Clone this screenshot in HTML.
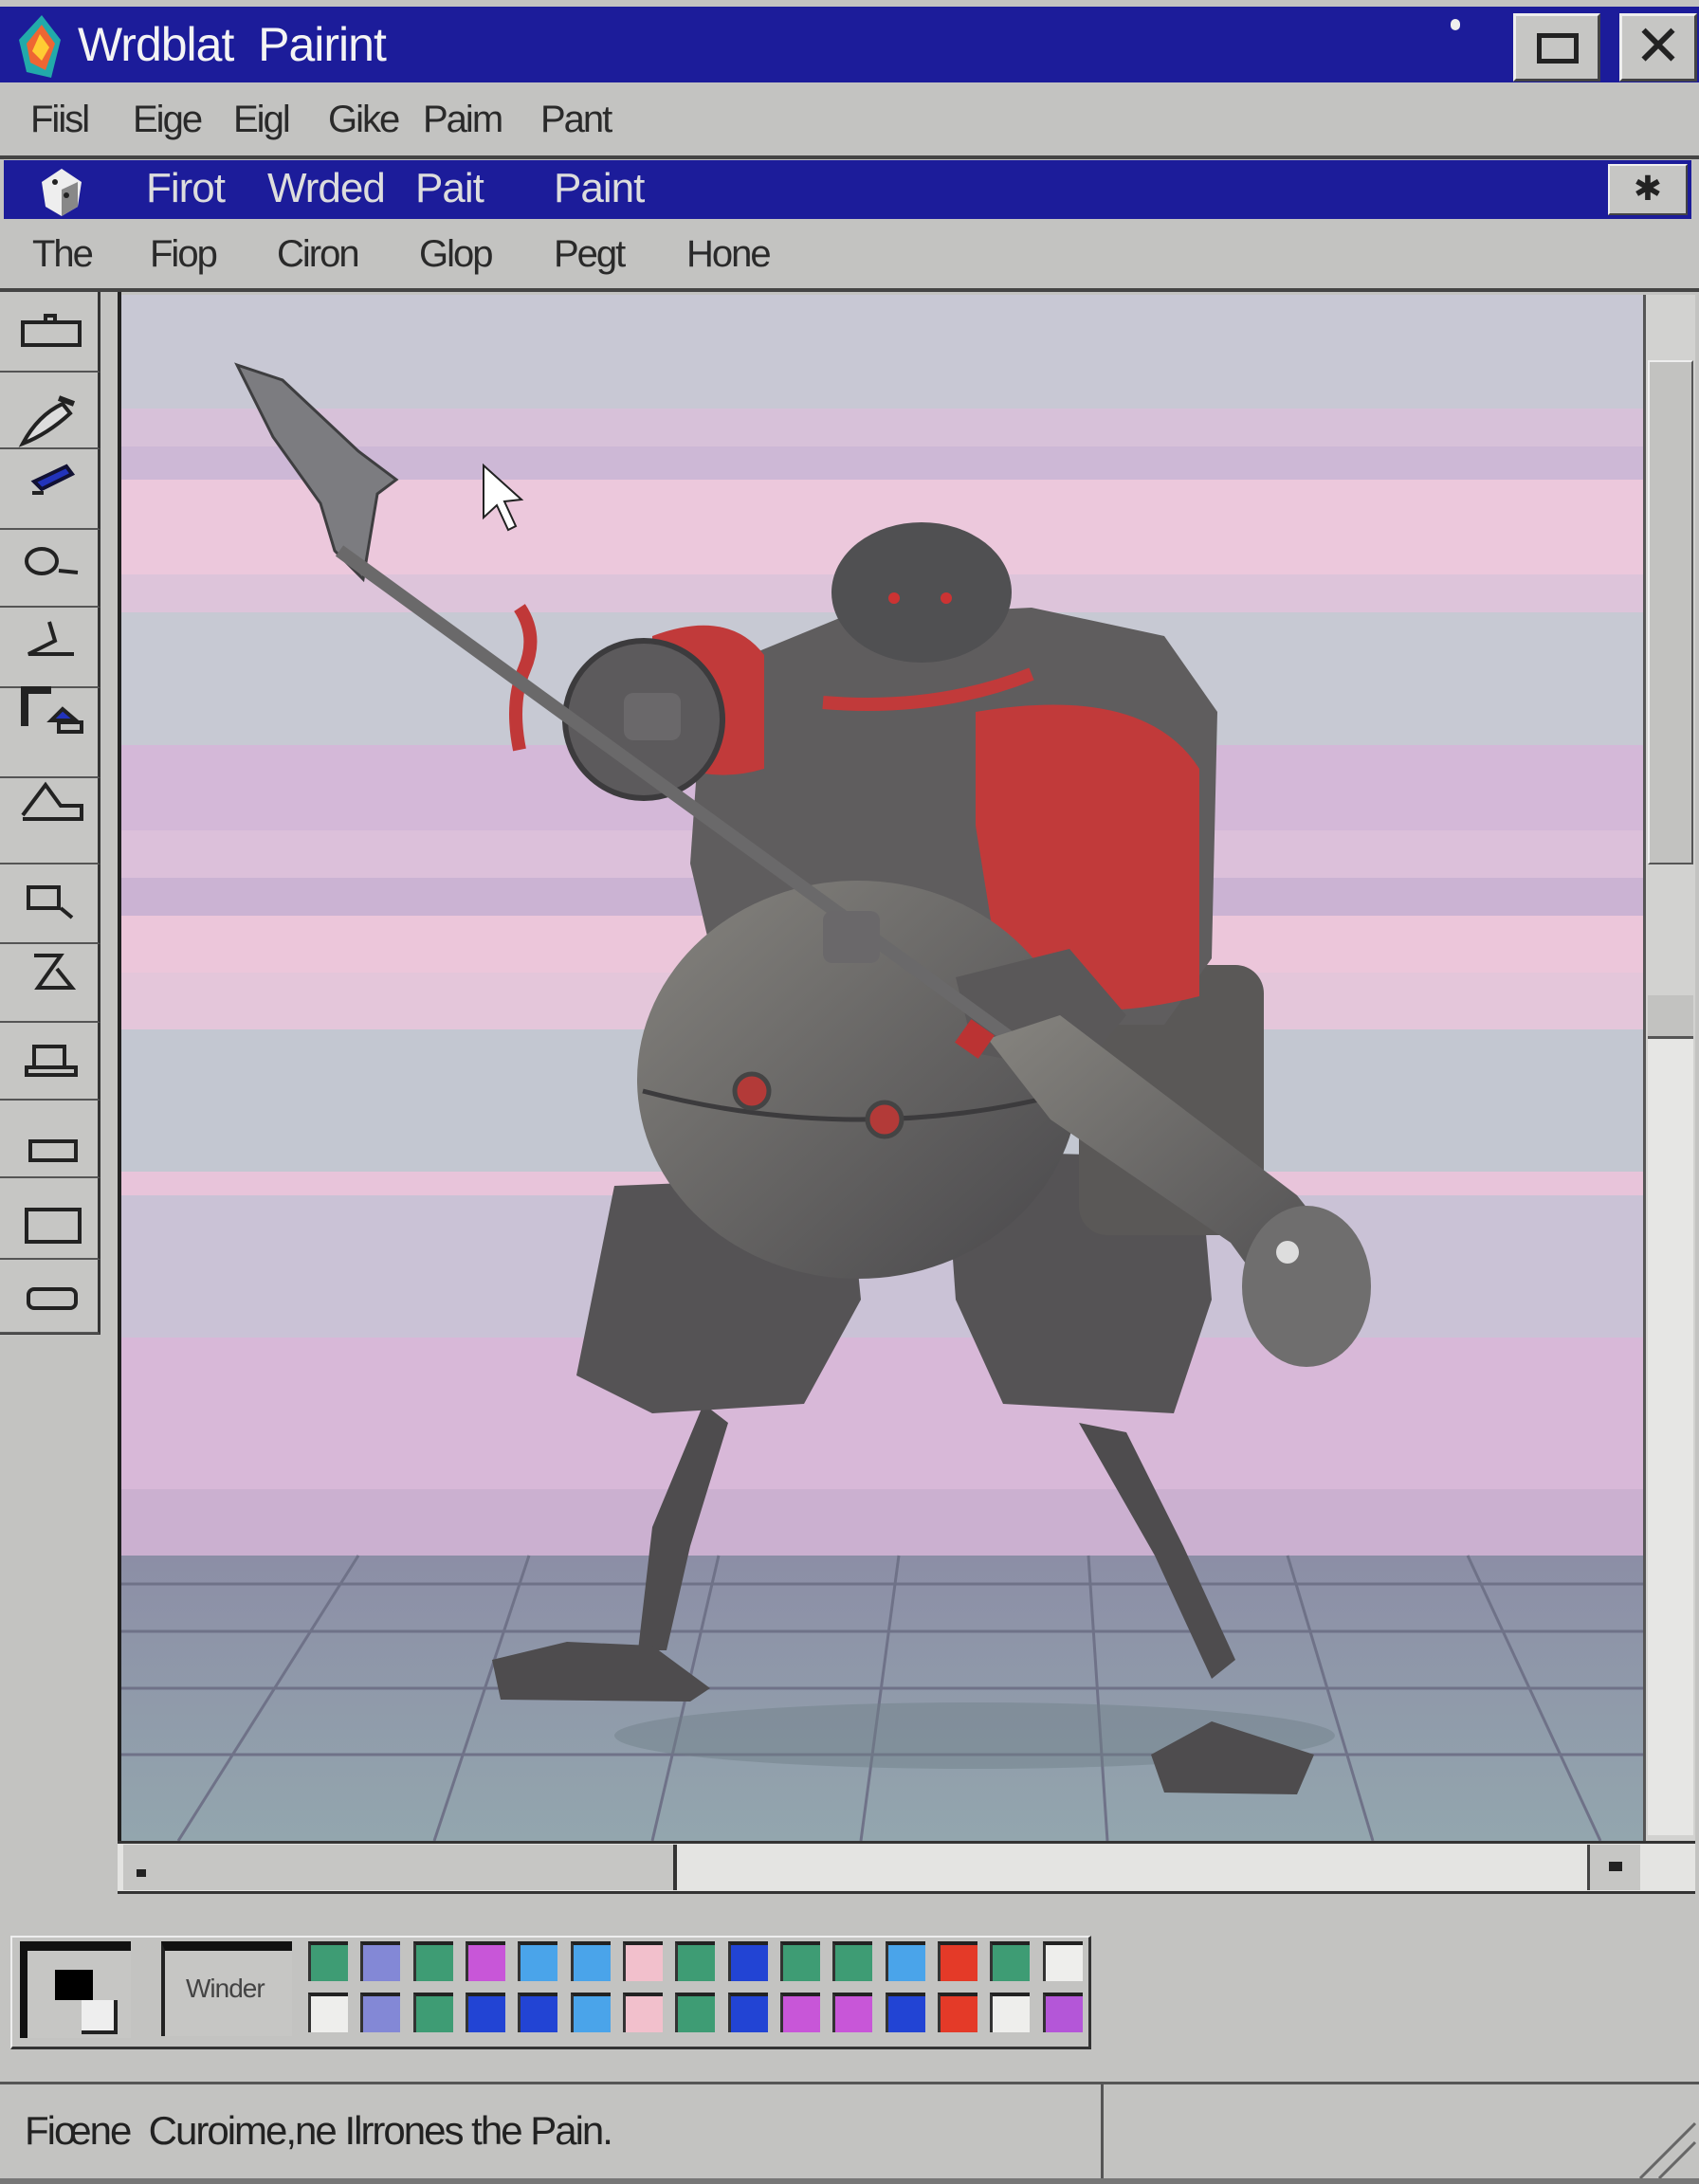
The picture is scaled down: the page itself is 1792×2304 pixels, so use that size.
<!DOCTYPE html>
<html><head><meta charset="utf-8">
<style>
*{margin:0;padding:0;box-sizing:border-box}
body{width:1792px;height:2304px;background:#c3c3c1;position:relative;overflow:hidden;font-family:"Liberation Sans",sans-serif}
.abs{position:absolute}
.blue{background:#1c1c9a}
.t{position:absolute;color:#f4f4f4;font-size:50px;letter-spacing:-1px}
.m{position:absolute;color:#2a2a2a;font-size:40px;letter-spacing:-2px}
.btn{position:absolute;left:0;width:106px;border-bottom:2px solid #555;border-right:3px solid #333;background:#c6c6c4}
.sw{position:absolute;width:42px;height:42px;border-top:4px solid #222;border-left:3px solid #333}
</style></head><body>
<div class="abs blue" style="left:0;top:7px;width:1792px;height:80px"></div>
<svg class="abs" style="left:14px;top:12px" width="60" height="76"><polygon points="30,4 50,30 40,70 14,64 6,30" fill="#2aa"/><polygon points="30,14 44,34 34,62 18,54 14,34" fill="#e63"/><polygon points="28,24 38,38 30,52 20,42" fill="#fc3"/></svg>
<div class="t" style="left:82px;top:18px">Wrdblat&nbsp; Pairint</div>
<div class="abs" style="left:1530px;top:20px;width:10px;height:12px;background:#eee;border-radius:5px"></div>
<div class="abs" style="left:1596px;top:14px;width:92px;height:72px;background:#c6c6c4;border:3px solid #eee;border-right-color:#444;border-bottom-color:#444"><div class="abs" style="left:22px;top:18px;width:44px;height:32px;border:5px solid #222"></div></div>
<div class="abs" style="left:1708px;top:14px;width:82px;height:72px;background:#c6c6c4;border:3px solid #eee;border-right-color:#444;border-bottom-color:#444;font-size:60px;line-height:64px;text-align:center;color:#222">✕</div>
<div class="m" style="left:32px;top:104px">Fiisl</div>
<div class="m" style="left:140px;top:104px">Eige</div>
<div class="m" style="left:246px;top:104px">Eigl</div>
<div class="m" style="left:346px;top:104px">Gike</div>
<div class="m" style="left:446px;top:104px">Paim</div>
<div class="m" style="left:570px;top:104px">Pant</div>
<div class="abs" style="left:0;top:164px;width:1792px;height:4px;background:#444"></div>
<div class="abs blue" style="left:4px;top:169px;width:1780px;height:62px"></div>
<svg class="abs" style="left:38px;top:174px" width="54" height="56"><polygon points="27,4 48,18 44,44 27,54 10,44 6,18" fill="#eee"/><polygon points="27,26 44,18 44,44 27,54" fill="#888"/><circle cx="20" cy="18" r="3" fill="#222"/><circle cx="32" cy="32" r="3" fill="#222"/></svg>
<div class="t" style="left:154px;top:174px;font-size:44px;color:#ddd">Firot</div>
<div class="t" style="left:282px;top:174px;font-size:44px;color:#ddd">Wrded</div>
<div class="t" style="left:438px;top:174px;font-size:44px;color:#ddd">Pait</div>
<div class="t" style="left:584px;top:174px;font-size:44px;color:#ddd">Paint</div>
<div class="abs" style="left:1696px;top:173px;width:84px;height:54px;background:#c6c6c4;border:2px solid #eee;border-right-color:#444;border-bottom-color:#444;font-size:36px;text-align:center;line-height:48px;color:#222">✱</div>
<div class="m" style="left:34px;top:246px">The</div>
<div class="m" style="left:158px;top:246px">Fiop</div>
<div class="m" style="left:292px;top:246px">Ciron</div>
<div class="m" style="left:442px;top:246px">Glop</div>
<div class="m" style="left:584px;top:246px">Pegt</div>
<div class="m" style="left:724px;top:246px">Hone</div>
<div class="abs" style="left:0;top:304px;width:1792px;height:4px;background:#444"></div>
<div class="abs" style="left:0;top:308px;width:106px;height:1100px;background:#c6c6c4;border-right:3px solid #333;border-bottom:3px solid #333"></div>
<div class="btn" style="top:308px;height:85px"></div>
<div class="btn" style="top:393px;height:81px"></div>
<div class="btn" style="top:474px;height:85px"></div>
<div class="btn" style="top:559px;height:82px"></div>
<div class="btn" style="top:641px;height:85px"></div>
<div class="btn" style="top:726px;height:95px"></div>
<div class="btn" style="top:821px;height:91px"></div>
<div class="btn" style="top:912px;height:84px"></div>
<div class="btn" style="top:996px;height:83px"></div>
<div class="btn" style="top:1079px;height:82px"></div>
<div class="btn" style="top:1161px;height:82px"></div>
<div class="btn" style="top:1243px;height:86px"></div>
<div class="btn" style="top:1329px;height:78px"></div>
<svg class="abs" style="left:0;top:308px" width="106" height="1100" fill="none" stroke="#222" stroke-width="4">
<rect x="24" y="32" width="60" height="24"/><rect x="48" y="25" width="10" height="7"/>
<path d="M24,160 Q40,130 66,118 L74,128 Q50,150 24,160Z" fill="#ddd"/><path d="M62,112 L78,118" stroke-width="6"/>
<path d="M36,200 L70,184 L76,192 L44,208Z" fill="#2233bb" stroke="#113"/><path d="M34,212 L46,212"/>
<ellipse cx="44" cy="284" rx="16" ry="13"/><path d="M62,294 L82,296"/>
<path d="M52,348 L58,368 L30,382 L78,382"/>
<path d="M26,458 L26,420 L54,420" stroke-width="8"/><path d="M54,452 L66,440 L80,452Z" fill="#2233bb"/><rect x="62" y="454" width="24" height="10"/>
<path d="M24,552 L48,520 L64,542 L86,542 L86,556 L24,556"/>
<rect x="30" y="628" width="32" height="22"/><path d="M64,650 L76,660"/>
<path d="M36,700 L64,700 L40,734 L76,734 L60,714"/>
<path d="M36,818 L36,796 L68,796 L68,818 M28,818 L80,818 L80,826 L28,826Z"/>
<rect x="32" y="896" width="48" height="20"/>
<rect x="28" y="968" width="56" height="34"/>
<rect x="30" y="1052" width="50" height="20" rx="6"/>
</svg>
<div class="abs" style="left:124px;top:308px;width:4px;height:1690px;background:#222"></div>
<svg class="abs" style="left:128px;top:311px" width="1605" height="1631">
<defs><linearGradient id="fl" x1="0" y1="0" x2="0" y2="1"><stop offset="0" stop-color="#8c8ea6"/><stop offset="1" stop-color="#93a6ae"/></linearGradient>
<linearGradient id="ms" x1="0" y1="0" x2="1" y2="1"><stop offset="0" stop-color="#86847f"/><stop offset="1" stop-color="#48474a"/></linearGradient></defs>
<rect width="1605" height="1631" fill="#c8c8d4"/>
<rect y="120" width="1605" height="40" fill="#d7c1d9"/>
<rect y="160" width="1605" height="35" fill="#cdb8d6"/>
<rect y="195" width="1605" height="100" fill="#ecc8dc"/>
<rect y="295" width="1605" height="40" fill="#ddc4da"/>
<rect y="335" width="1605" height="140" fill="#c7c9d3"/>
<rect y="475" width="1605" height="90" fill="#d4b8d8"/>
<rect y="565" width="1605" height="50" fill="#dcc0da"/>
<rect y="615" width="1605" height="40" fill="#cbb3d3"/>
<rect y="655" width="1605" height="60" fill="#ecc6da"/>
<rect y="715" width="1605" height="60" fill="#e4c6da"/>
<rect y="775" width="1605" height="150" fill="#c3c7d1"/>
<rect y="925" width="1605" height="25" fill="#e8c4da"/>
<rect y="950" width="1605" height="150" fill="#cac2d6"/>
<rect y="1100" width="1605" height="160" fill="#d8b8d8"/>
<rect y="1260" width="1605" height="70" fill="#cbb0d0"/>
<rect y="1330" width="1605" height="301" fill="url(#fl)"/>
<g stroke="#6f7288" stroke-width="3" fill="none">
<path d="M0,1360 H1605 M0,1410 H1605 M0,1470 H1605 M0,1540 H1605"/>
<path d="M430,1330 L330,1631 M630,1330 L560,1631 M820,1330 L780,1631 M1020,1330 L1040,1631 M1230,1330 L1320,1631 M1420,1330 L1560,1631 M250,1330 L60,1631"/>
</g>
<ellipse cx="900" cy="1520" rx="380" ry="35" fill="#6f7e88" opacity=".45"/>
<!-- blade -->
<path d="M122,74 L170,90 L250,165 L290,195 L270,210 L255,300 L225,270 L210,220 L160,150Z" fill="#7c7c80" stroke="#3e3e40" stroke-width="3"/>
<path d="M420,330 Q440,360 425,395 Q410,430 420,480" stroke="#c03838" stroke-width="14" fill="none"/>
<!-- legs -->
<path d="M614,1170 L640,1190 L600,1320 L575,1430 L545,1430 L560,1300Z" fill="#4e4c4e"/>
<path d="M391,1440 L470,1421 L560,1425 L621,1470 L600,1484 L400,1482Z" fill="#4e4c4e"/>
<path d="M1010,1190 L1060,1200 L1120,1320 L1175,1440 L1150,1460 L1090,1330Z" fill="#4e4c4e"/>
<path d="M1086,1540 L1150,1505 L1258,1540 L1240,1582 L1100,1580Z" fill="#4e4c4e"/>
<!-- thighs -->
<path d="M520,940 L767,930 L780,1060 L720,1170 L560,1180 L480,1140Z" fill="#555355"/>
<path d="M869,903 L1137,910 L1150,1060 L1110,1180 L930,1170 L880,1060Z" fill="#555355"/>
<!-- hip right -->
<rect x="1010" y="707" width="195" height="285" rx="30" fill="#5a5857"/>
<!-- chest -->
<path d="M614,400 L760,340 L960,330 L1100,360 L1156,440 L1150,700 L1100,770 L640,770 L600,600Z" fill="#5f5d5e"/>
<path d="M901,440 Q1080,410 1137,500 L1137,740 Q1020,770 930,740 L901,560Z" fill="#c13a3a"/>
<path d="M560,360 Q640,330 678,380 L678,500 Q610,520 560,480Z" fill="#c13a3a"/>
<path d="M740,430 Q860,440 960,400" stroke="#c13a3a" stroke-width="14" fill="none"/>
<!-- belly -->
<ellipse cx="777" cy="828" rx="233" ry="210" fill="url(#ms)"/>
<path d="M550,840 Q780,900 1005,840" stroke="#3c3b3d" stroke-width="5" fill="none"/>
<circle cx="665" cy="840" r="18" fill="#b33a38" stroke="#444" stroke-width="5"/>
<circle cx="805" cy="870" r="18" fill="#b33a38" stroke="#444" stroke-width="5"/>
<!-- head & shoulder pad -->
<ellipse cx="844" cy="314" rx="95" ry="74" fill="#505052"/>
<circle cx="815" cy="320" r="6" fill="#c33"/><circle cx="870" cy="320" r="6" fill="#c33"/>
<circle cx="551" cy="448" r="83" fill="#5c5a5c" stroke="#3c3b3d" stroke-width="6"/>
<!-- forearm right -->
<path d="M880,720 L1000,690 L1060,760 L1010,820 L900,800Z" fill="#5a5859"/>
<!-- staff -->
<line x1="230" y1="270" x2="1180" y2="960" stroke="#6a696a" stroke-width="14"/>
<path d="M914,785 L990,760 L1240,950 L1316,1046 L1250,1110 L1170,1000 L980,870Z" fill="url(#ms)"/>
<rect x="885" y="770" width="30" height="30" fill="#b33" transform="rotate(35 900 785)"/>
<ellipse cx="1250" cy="1046" rx="68" ry="85" fill="#6f6e6e"/>
<circle cx="1230" cy="1010" r="12" fill="#ddd"/>
<rect x="530" y="420" width="60" height="50" rx="10" fill="#6a686a"/>
<rect x="740" y="650" width="60" height="55" rx="10" fill="#6a686a"/>
<!-- cursor -->
<path d="M382,180 L382,235 L396,222 L408,248 L416,244 L404,218 L422,216Z" fill="#fff" stroke="#222" stroke-width="2"/>
</svg>
<div class="abs" style="left:1733px;top:311px;width:55px;height:1631px;background:#d2d2d0;border-left:3px solid #555"></div>
<div class="abs" style="left:1738px;top:380px;width:48px;height:532px;background:#c2c2c0;border:2px solid #eee;border-right-color:#555;border-bottom-color:#555"></div>
<div class="abs" style="left:1738px;top:1050px;width:48px;height:46px;background:#c2c2c0;border-bottom:3px solid #555"></div>
<div class="abs" style="left:1738px;top:1096px;width:48px;height:840px;background:#e6e6e4"></div>
<div class="abs" style="left:124px;top:1942px;width:1664px;height:56px;background:#e4e4e2;border-top:3px solid #333;border-bottom:3px solid #333"></div>
<div class="abs" style="left:130px;top:1946px;width:584px;height:48px;background:#c6c6c4;border-right:4px solid #333"></div>
<div class="abs" style="left:144px;top:1972px;width:10px;height:8px;background:#222"></div>
<div class="abs" style="left:1674px;top:1946px;width:56px;height:48px;background:#c6c6c4;border-left:3px solid #444"><div class="abs" style="left:20px;top:18px;width:14px;height:10px;background:#222"></div></div>
<div class="abs" style="left:11px;top:2042px;width:1140px;height:120px;border:2px solid #eee;border-right:3px solid #333;border-bottom:3px solid #333"></div>
<div class="abs" style="left:21px;top:2048px;width:117px;height:102px;border-top:10px solid #111;border-left:8px solid #111;background:#c6c6c4"></div>
<div class="abs" style="left:58px;top:2078px;width:40px;height:32px;background:#000"></div>
<div class="abs" style="left:86px;top:2110px;width:38px;height:36px;background:#eee;border-right:4px solid #222;border-bottom:4px solid #222"></div>
<div class="abs" style="left:170px;top:2048px;width:138px;height:100px;border-top:10px solid #111;border-left:4px solid #222;background:#c6c6c4;font-size:28px;color:#444;padding:24px 0 0 22px;letter-spacing:-1px">Winder</div>
<div class="sw" style="left:325px;top:2048px;background:#3e9c74"></div>
<div class="sw" style="left:380px;top:2048px;background:#8388d6"></div>
<div class="sw" style="left:436px;top:2048px;background:#3e9c74"></div>
<div class="sw" style="left:491px;top:2048px;background:#c856d8"></div>
<div class="sw" style="left:546px;top:2048px;background:#4aa4ea"></div>
<div class="sw" style="left:602px;top:2048px;background:#4aa4ea"></div>
<div class="sw" style="left:657px;top:2048px;background:#f2c0cc"></div>
<div class="sw" style="left:712px;top:2048px;background:#3e9c74"></div>
<div class="sw" style="left:768px;top:2048px;background:#2244d4"></div>
<div class="sw" style="left:823px;top:2048px;background:#3e9c74"></div>
<div class="sw" style="left:878px;top:2048px;background:#3e9c74"></div>
<div class="sw" style="left:934px;top:2048px;background:#4aa4ea"></div>
<div class="sw" style="left:989px;top:2048px;background:#e43a28"></div>
<div class="sw" style="left:1044px;top:2048px;background:#3e9c74"></div>
<div class="sw" style="left:1100px;top:2048px;background:#eeeeec"></div>
<div class="sw" style="left:325px;top:2102px;background:#eeeeec"></div>
<div class="sw" style="left:380px;top:2102px;background:#8388d6"></div>
<div class="sw" style="left:436px;top:2102px;background:#3e9c74"></div>
<div class="sw" style="left:491px;top:2102px;background:#2244d4"></div>
<div class="sw" style="left:546px;top:2102px;background:#2244d4"></div>
<div class="sw" style="left:602px;top:2102px;background:#4aa4ea"></div>
<div class="sw" style="left:657px;top:2102px;background:#f2c0cc"></div>
<div class="sw" style="left:712px;top:2102px;background:#3e9c74"></div>
<div class="sw" style="left:768px;top:2102px;background:#2244d4"></div>
<div class="sw" style="left:823px;top:2102px;background:#c856d8"></div>
<div class="sw" style="left:878px;top:2102px;background:#c856d8"></div>
<div class="sw" style="left:934px;top:2102px;background:#2244d4"></div>
<div class="sw" style="left:989px;top:2102px;background:#e43a28"></div>
<div class="sw" style="left:1044px;top:2102px;background:#eeeeec"></div>
<div class="sw" style="left:1100px;top:2102px;background:#b456d8"></div>
<div class="abs" style="left:0;top:2196px;width:1792px;height:3px;background:#555"></div>
<div class="abs" style="left:1161px;top:2199px;width:3px;height:100px;background:#555"></div>
<div class="m" style="left:26px;top:2224px;font-size:42px;color:#222">Fiœne&nbsp; Curoime,ne Ilrrones the Pain.</div>
<svg class="abs" style="left:1720px;top:2220px" width="70" height="80" stroke="#666" stroke-width="3"><path d="M10,78 L68,20 M30,78 L68,40"/></svg>
<div class="abs" style="left:0;top:2298px;width:1792px;height:6px;background:#777"></div>
</body></html>
